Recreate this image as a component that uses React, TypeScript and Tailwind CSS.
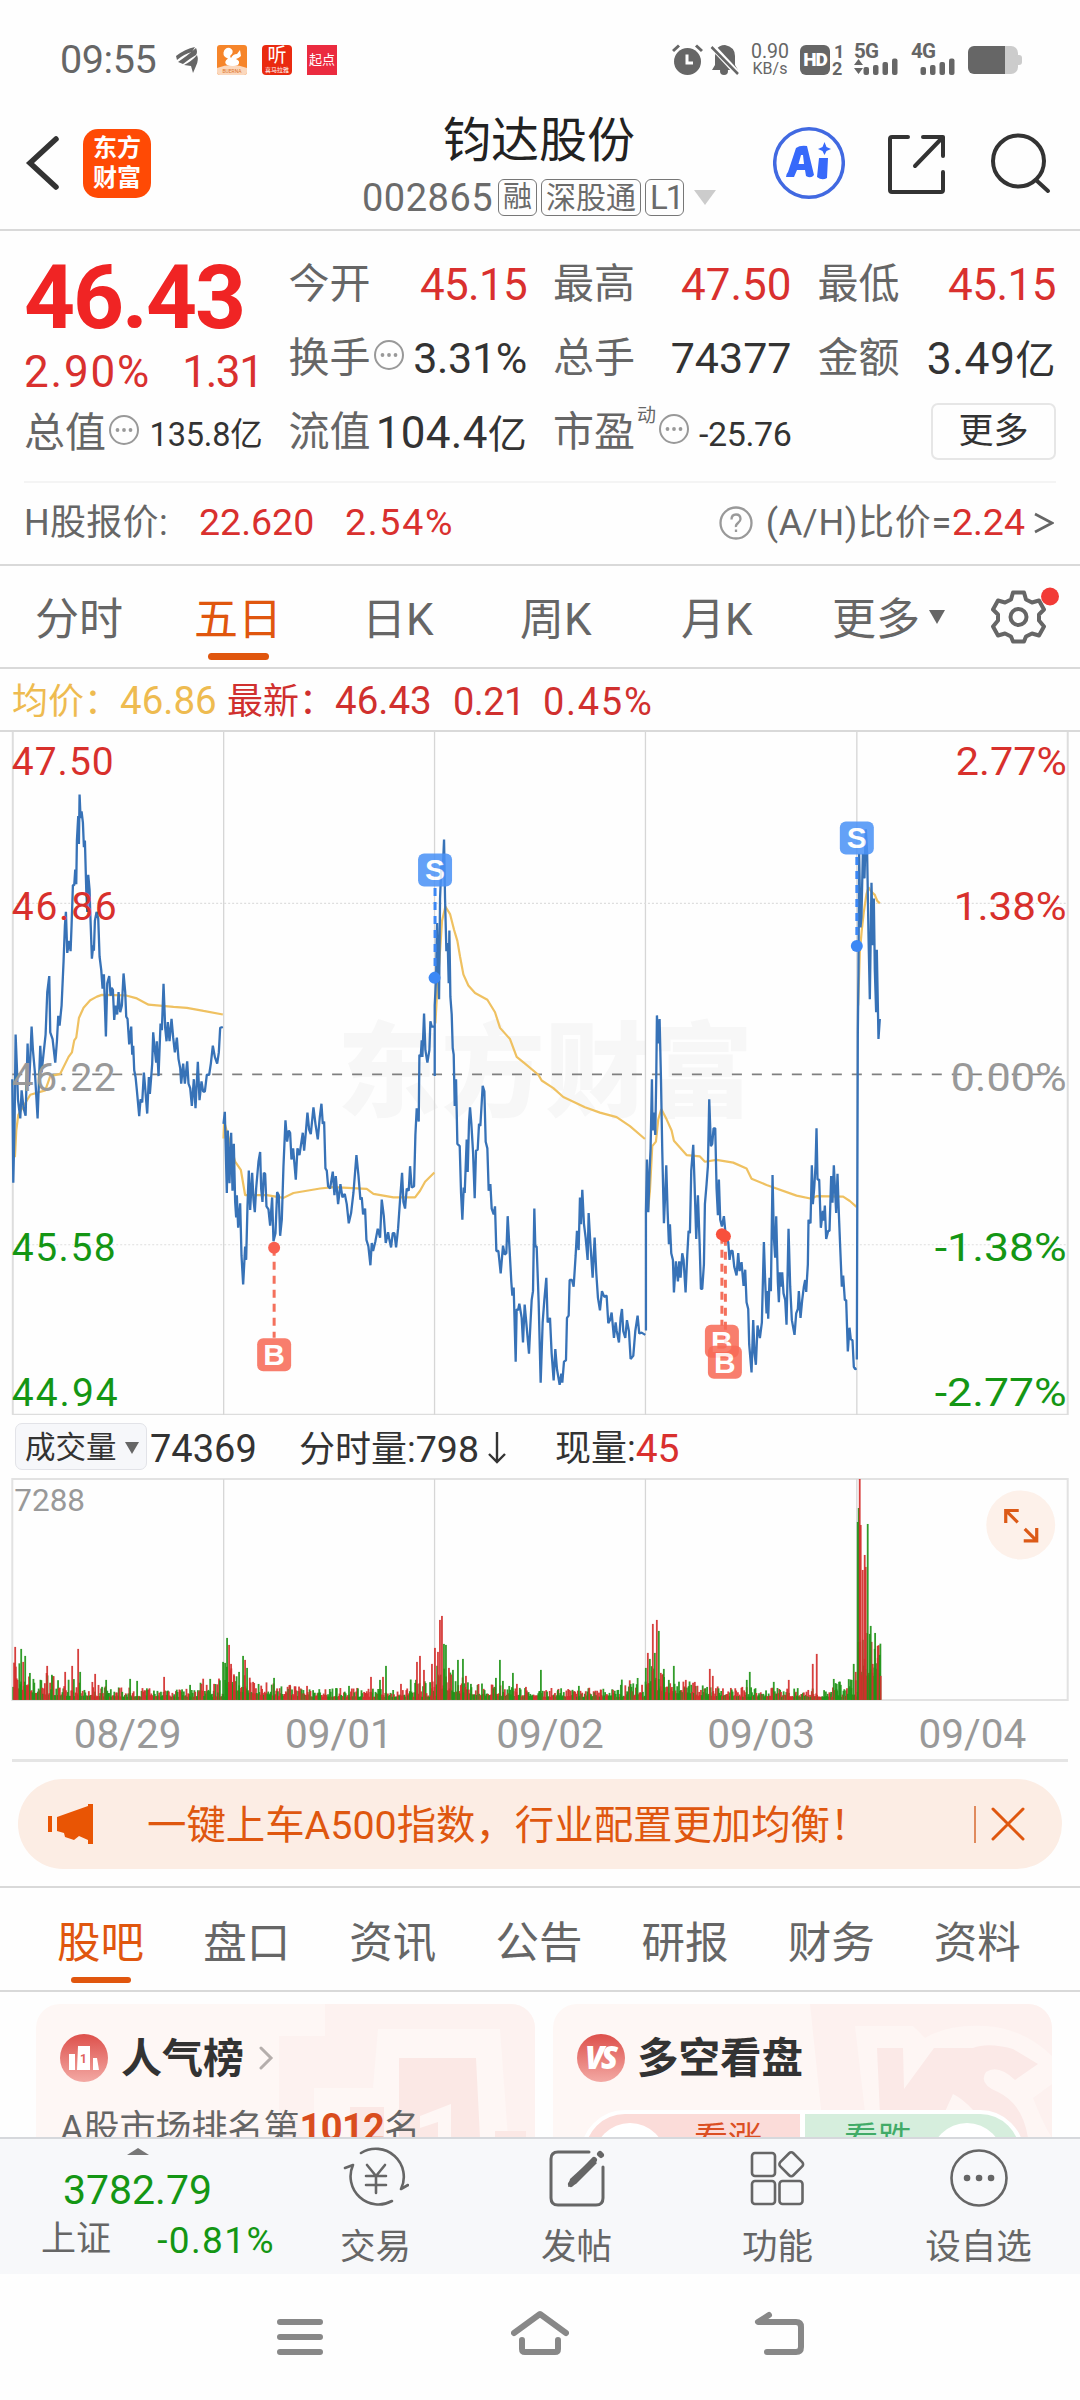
import type { ReactNode } from "react";

interface DaySeries {
  offset: number;
  price: string;
  average: string;
}

// x is three units per pixel, y is 2.24 units per pixel
const DAYS: DaySeries[] = [
  {
    offset: 0,
    price:
      "36,805 39,1037 43,900 46,705 50,780 53,850 60,893 64,830 70,870 76,887 82,725 86,820 90,760 94,687 98,740 104,790 112,893 117,790 120,730 124,790 131,740 136,705 141,610 147,574 150,700 157,715 165,768 170,720 174,663 178,685 184,640 190,540 194,460 197,430 201,522 207,495 211,518 214,460 218,370 222,370 225,335 228,368 230,270 234,215 236,278 238,167 241,220 244,205 248,230 251,285 254,270 258,380 261,430 264,347 268,380 270,430 275,535 279,505 281,517 284,450 289,430 294,445 298,530 303,560 307,602 311,570 317,709 321,590 327,574 331,618 334,600 338,605 342,672 346,640 351,660 355,610 360,655 365,640 370,568 375,610 378,665 382,670 387,727 393,687 396,750 399,730 402,785 406,800 410,830 417,888 421,850 426,857 431,790 435,825 441,882 446,800 449,838 453,800 456,770 459,700 463,735 468,768 470,720 475,798 481,680 485,695 490,591 495,690 499,720 503,677 508,720 514,670 519,712 524,745 530,712 535,760 540,780 543,815 549,770 554,815 561,765 565,815 570,825 575,865 581,805 586,870 593,766 598,852 604,810 609,833 614,833 620,795 627,795 632,770 638,730 644,755 651,770 656,745 660,690 668,688",
    average:
      "44,980 48,920 54,885 70,865 90,840 135,830 150,798 180,793 205,755 215,745 222,718 228,712 236,668 250,645 270,628 290,620 305,616 375,617 410,624 445,638 520,643 560,645 610,652 668,660",
  },
  {
    offset: 0,
    price:
      "670,905 674,878 680,1060 683,920 688,1038 693,925 697,1055 701,950 705,1080 708,1115 710,1065 714,1138 720,1083 724,1200 729,1265 735,1180 738,1210 742,1090 746,1010 750,1098 756,1015 760,1075 764,1103 768,1050 775,990 780,968 783,1050 787,1080 791,1015 795,1017 799,1090 805,1097 810,1133 816,1070 820,1168 826,1150 831,1058 836,1065 840,1156 845,1120 850,1000 856,897 861,945 866,920 870,925 874,985 879,960 887,1030 892,960 898,975 904,945 908,925 912,965 917,925 922,880 927,918 932,928 940,868 946,905 953,940 959,890 964,860 968,905 972,900 976,1005 980,1010 984,1045 990,1050 998,1012 1003,1065 1007,1022 1014,1085 1021,1040 1027,1070 1034,1062 1040,1085 1046,1128 1053,1105 1060,1060 1069,975 1075,1020 1081,1075 1085,1070 1089,1108 1095,1095 1099,1165 1105,1180 1111,1222 1115,1172 1119,1190 1126,1168 1133,1140 1140,1160 1145,1075 1151,1110 1157,1172 1164,1148 1168,1165 1173,1182 1178,1150 1183,1150 1188,1182 1194,1140 1200,1075 1206,1015 1210,1080 1215,1095 1220,1050 1226,1055 1230,1000 1235,1048 1242,1045 1246,930 1250,870 1256,900 1258,750 1262,755 1265,718 1267,755 1272,658 1276,740 1282,768 1288,740 1291,675 1295,687 1303,687",
    average:
      "670,938 672,900 705,990 722,1008 735,1065 800,1065 850,1071 880,1060 960,1050 1000,1047 1100,1051 1120,1062 1180,1070 1245,1070 1260,1055 1275,1035 1303,1014",
  },
  {
    offset: 1200,
    price:
      "104,798 104,640 108,580 111,455 117,626 120,400 124,325 128,340 132,268 135,400 139,518 143,500 146,590 148,472 151,620 155,660 158,735 161,750 164,865 168,805 172,950 179,955 183,1060 187,1120 191,1048 194,1060 200,940 203,1013 207,900 210,868 214,905 219,968 224,1072 228,965 233,963 237,905 241,910 248,820 253,832 257,945 262,960 266,1055 271,1040 275,1095 281,1108 285,1090 289,1190 295,1190 302,1240 309,1178 314,1198 319,1195 323,1112 328,1178 334,1260 337,1290 341,1272 347,1438 350,1320 354,1323 358,1308 365,1340 369,1395 374,1310 380,1360 387,1420 391,1358 395,1300 399,1280 403,1095 406,1180 410,1180 416,1305 422,1485 428,1350 433,1300 439,1250 443,1350 450,1340 455,1420 461,1480 466,1410 471,1455 479,1490 484,1465 487,1485 492,1438 498,1435 501,1340 506,1335 509,1255 516,1255 521,1270 527,1200 531,1145 536,1188 540,1070 543,1130 547,1053 552,1130 557,1160 563,1210 566,1105 571,1170 578,1250 584,1160 589,1240 594,1295 600,1323 606,1280 613,1293 620,1290 625,1352 630,1345 635,1328 642,1385 647,1350 650,1368 657,1395 662,1340 666,1320 670,1370 676,1385 681,1345 687,1370 692,1432 700,1425 706,1370 713,1335 718,1375 725,1373 736,1378",
    average:
      "106,680 112,600 118,540 126,450 136,418 150,435 162,470 172,495 180,530 190,570 205,595 225,612 262,627 285,655 300,690 330,715 350,755 375,770 415,795 425,808 460,825 490,845 555,868 600,880 650,890 690,910 735,939",
  },
  {
    offset: 1200,
    price:
      "738,1368 738,1100 741,985 745,1103 749,1010 752,960 756,805 758,920 762,880 766,930 769,800 771,662 775,725 779,670 783,800 787,965 792,1128 796,1060 799,998 803,1100 807,1175 810,1130 814,1195 819,1210 822,1283 828,1213 834,1258 838,1213 842,1250 847,1195 851,1210 857,1283 862,1200 866,1145 870,1150 874,1010 880,952 884,1040 889,1163 894,1065 899,1170 903,1275 907,1275 912,1220 915,1085 920,1040 924,1000 928,850 933,955 937,950 941,915 946,915 950,1050 954,1110 957,1030 961,1120 966,1135 972,1112 978,1160 985,1170 989,1210 993,1190 998,1190 1003,1225 1010,1245 1015,1195 1019,1235 1025,1215 1031,1268 1036,1232 1040,1305 1045,1320 1048,1400 1055,1462 1060,1345 1064,1420 1068,1445 1073,1357 1080,1385 1086,1350 1092,1170 1096,1260 1100,1330 1103,1280 1105,1342 1109,1250 1113,1280 1118,1020 1122,1160 1126,1205 1129,1112 1134,1260 1137,1305 1140,1238 1144,1270 1147,1238 1151,1285 1156,1300 1160,1355 1166,1140 1171,1270 1176,1345 1184,1378 1189,1330 1194,1320 1197,1280 1202,1340 1207,1300 1212,1270 1216,1255 1219,1282 1224,1220 1226,1120 1232,1128 1236,998 1239,1085 1243,1050 1247,1000 1250,915 1253,1030 1258,1030 1263,1138 1269,1100 1272,1122 1275,1088 1279,1163 1285,1145 1289,1145 1294,1022 1298,1082 1302,998 1306,1060 1309,1105 1313,1017 1317,1105 1321,1180 1326,1270 1330,1245 1335,1300 1339,1300 1344,1415 1349,1362 1353,1388 1358,1390 1362,1450 1366,1455 1370,1453",
    average:
      "744,1100 750,1055 757,955 768,945 775,895 784,872 800,895 815,920 822,943 860,975 900,978 915,990 950,986 1000,992 1040,1005 1055,1028 1100,1042 1190,1066 1235,1073 1250,1067 1330,1068 1350,1078 1370,1091",
  },
  {
    offset: 2100,
    price:
      "471,1433 474,700 476,568 478,300 482,465 485,440 489,300 494,355 498,245 502,300 506,480 510,626 515,365 519,505 522,400 525,560 529,655 531,515 536,715 540,670",
    average: "475,640 480,520 486,470 492,430 500,390 506,375 515,385 525,392 532,405 540,411",
  },
];

const UP = "#d8302c";
const DOWN = "#149614";

// [x, height, is up] of the volume bars that stand out
const PEAKS: [number, number, boolean][] = [
  [14, 53, true], [20, 51, false], [22, 38, true], [24, 44, false], [46, 34, true], [64, 28, true], [71, 34, true],
  [77, 51, true], [79, 28, false], [94, 26, true], [105, 20, false], [129, 21, false], [136, 19, false], [163, 23, true],
  [189, 15, false], [213, 16, true], [222, 38, false], [224, 37, false], [226, 62, false], [228, 55, true], [230, 36, true], [233, 24, true],
  [238, 28, false], [242, 44, false], [244, 40, true], [246, 32, false], [252, 18, true], [273, 22, false], [289, 15, true],
  [306, 14, true], [348, 14, false], [370, 23, true], [379, 20, false], [382, 23, true], [385, 34, false], [400, 16, true],
  [416, 38, true], [419, 44, true], [423, 30, true], [431, 36, true], [434, 52, true], [437, 48, true], [439, 80, true],
  [441, 84, true], [443, 56, false], [445, 55, false], [448, 32, true], [452, 30, false], [457, 40, false], [462, 41, false],
  [465, 24, true], [470, 16, false], [495, 22, false], [499, 40, false], [502, 19, false], [512, 27, false], [516, 16, true],
  [540, 30, false], [557, 10, false], [578, 14, false], [600, 10, true], [620, 15, false], [645, 32, false], [647, 47, true],
  [649, 41, false], [652, 76, true], [654, 47, false], [656, 80, true], [658, 69, false], [660, 27, true], [663, 31, false],
  [668, 20, false], [673, 34, false], [685, 20, true], [694, 18, true], [709, 31, true], [712, 24, true], [746, 20, false],
  [749, 28, false], [773, 18, false], [788, 20, true], [812, 36, true], [816, 46, true], [836, 16, false], [851, 20, false],
  [853, 36, false], [855, 28, true], [857, 178, false], [858, 192, false], [859, 221, true], [860, 175, true],
  [862, 130, true], [864, 145, true], [865, 133, true], [867, 176, false], [869, 66, false], [870, 74, false],
  [872, 36, true], [874, 51, false], [877, 54, true], [879, 45, false], [880, 24, true],
];

function baseBars() {
  const bars: [number, number, boolean][] = [];
  let seed = 17;
  const next = () => {
    seed = (seed * 16807) % 2147483647;
    return seed / 2147483647;
  };
  for (let x = 12; x < 880; x += 0.88) {
    const phase = ((x - 12) % 211.3) / 211.3;
    const level = x > 857 ? 46 : 9 + 20 * Math.exp(-phase * 7) + (phase > 0.88 ? 10 : 0) + (x < 105 ? 6 : 0);
    const floor = x > 857 ? 24 : 3 + 10 * Math.exp(-phase * 9);
    bars.push([x, floor + level * Math.pow(next(), 2), next() > 0.5]);
  }
  return bars;
}

const BARS = [...baseBars(), ...PEAKS];
const DIVIDERS = [223.5, 434.5, 645.5, 857];

function Dots() {
  return (
    <svg width="32" height="32" viewBox="0 0 32 32" fill="#999" className="mb-[8px] ml-[2px] shrink-0">
      <circle cx="16" cy="16" r="14" fill="none" stroke="#999" strokeWidth="2" />
      <circle cx="9.5" cy="16" r="1.9" />
      <circle cx="16" cy="16" r="1.9" />
      <circle cx="22.5" cy="16" r="1.9" />
    </svg>
  );
}

function Signal({ label }: { label: string }) {
  return (
    <svg width="46" height="42" viewBox="0 0 46 42" fill="#666" className="ml-[11px]">
      <text x="0" y="19" fontSize="20.5" fontWeight="700" letterSpacing="-0.8">{label}</text>
      {label === "5G" && <path d="M0 26L4.500 20L9 26ZM0 29L4.500 35L9 29Z" />}
      <rect x="9.500" y="28" width="5.500" height="8" rx="2" />
      <rect x="19" y="26" width="5.500" height="10" rx="2" />
      <rect x="28.500" y="23" width="5.500" height="13" rx="2" />
      <rect x="38" y="19.500" width="5.500" height="16.500" rx="2" />
    </svg>
  );
}

function StatusBar() {
  return (
    <div className="flex h-[118px] items-center pt-[2px] pl-[60px] text-[#666]">
      <span className="w-[115px] text-[39.5px] tracking-[-0.4px]">09:55</span>
      <svg width="24" height="28" viewBox="0 0 24 28" fill="#666">
        <path d="M1 10Q10 3 20 1L17 6Q9 8 2 14Z" />
        <path d="M3 16Q12 10 21 2Q23 6 21 9Q14 13 8 18Z" />
        <path d="M9 19Q17 15 22 9Q24 14 21 20L18 27L16 20Z" />
      </svg>
      <svg width="30" height="30" viewBox="0 0 30 30" className="ml-[18px]">
        <rect width="30" height="30" rx="3" fill="#f6852a" />
        <path d="M0 23Q15 17 30 23V27a3 3 0 0 1-3 3H3a3 3 0 0 1-3-3Z" fill="#fbd8bd" />
        <path d="M10 20Q6 17 11 13.500Q6 12 6.500 7.500Q8 2 13 3Q17 5 15 9Q12 11 14 13Q16 9 20 9L23 5L24 11Q22 13 19 14Q24 16 21 20Q16 22 10 20Z" fill="#fff" />
        <text x="15" y="27.500" fontSize="5" textAnchor="middle" fill="#e0752a">BUERNA</text>
      </svg>
      <div className="ml-[15px] flex h-[30px] w-[30px] flex-col items-center rounded-[4px] bg-[#ea2a10] text-white">
        <span className="h-[21px] text-[19px] leading-[21px]">听</span>
        <span className="h-[9px] text-[6px] leading-[8px]">喜马拉雅</span>
      </div>
      <div className="ml-[15px] flex h-[30px] w-[30px] items-center justify-center bg-[#eb2b3f] text-[13px] text-white">起点</div>

      <svg width="31" height="32" viewBox="0 0 31 32" fill="#666" className="ml-[335px]">
        <circle cx="15.500" cy="17.500" r="13.500" />
        <path d="M1 7L7 1.500M24 1.500L30 7" stroke="#666" strokeWidth="3" />
        <path d="M15 10.500V19H21" stroke="#fff" strokeWidth="3" fill="none" />
      </svg>
      <svg width="30" height="32" viewBox="0 0 30 32" fill="#666" className="ml-[7px]">
        <path d="M6 6Q9 1 15 1Q25 3 25 12V21L28 26H2L5 21V12Z" />
        <circle cx="14" cy="27" r="4" />
        <path d="M1 1L28 30" stroke="#fff" strokeWidth="6" />
        <path d="M1.500 3L28 30" stroke="#666" strokeWidth="2.500" />
      </svg>
      <div className="ml-[9px] flex w-[42px] flex-col items-center leading-[17px]">
        <span className="text-[19.5px]">0.90</span>
        <span className="text-[16px]">KB/s</span>
      </div>
      <div className="ml-[9px] flex h-[30px] w-[30px] items-center justify-center rounded-[6px] bg-[#666] text-[19px] font-black tracking-[-1px] text-white">HD</div>
      <div className="ml-[2px] flex w-[11px] flex-col text-[18px] leading-[17px] font-bold">
        <span className="pl-[2px]">1</span>
        <span>2</span>
      </div>
      <Signal label="5G" />
      <Signal label="4G" />
      <svg width="54" height="28" viewBox="0 0 54 28" className="ml-[11px]">
        <path d="M37 0H43a7 7 0 0 1 7 7V21a7 7 0 0 1-7 7H37Z" fill="#ccc" />
        <rect x="47" y="9" width="7" height="10" rx="3" fill="#ccc" />
        <path d="M6 0H37V28H6a6 6 0 0 1-6-6V6a6 6 0 0 1 6-6Z" fill="#666" />
      </svg>
    </div>
  );
}

function Header() {
  return (
    <header className="flex h-[113px] border-b-2 border-[#d9d9d9]">
      <svg width="36" height="60" viewBox="0 0 36 60" className="mt-[15px] ml-[25px]">
        <path d="M31 6L5 30L31 54" fill="none" stroke="#333" strokeWidth="5.500" strokeLinecap="round" />
      </svg>
      <div className="mt-[11px] ml-[22px] flex h-[69px] w-[68px] flex-col items-center justify-center rounded-[15px] bg-[#ff4a05] text-[24px] leading-[30px] font-bold text-white">
        <span>东方</span>
        <span>财富</span>
      </div>
      <div className="ml-[186px] flex w-[404px] flex-col items-center pt-[2px]">
        <h1 className="h-[59px] text-[48px] leading-[42px] text-[#222]">钧达股份</h1>
        <div className="flex items-center leading-none text-[#6b6b6b]">
          <span className="w-[136px] text-[38px] tracking-[0.5px]">002865</span>
          <span className="flex h-[37px] items-center rounded-[6px] border border-[#777] px-[4px] text-[29px]">融</span>
          <span className="ml-[4px] flex h-[37px] items-center rounded-[6px] border border-[#777] px-[4px] text-[30px]">深股通</span>
          <span className="ml-[4px] flex h-[37px] w-[39px] items-center rounded-[6px] border border-[#777] pl-[4px] text-[33px] tracking-[-2px]">L1</span>
          <svg width="22" height="15" viewBox="0 0 22 15" className="ml-[10px]">
            <path d="M0 0H22L11 15Z" fill="#ccc" />
          </svg>
        </div>
      </div>
      <svg width="72" height="74" viewBox="0 0 72 74" className="mt-[8px] ml-[32px]">
        <circle cx="36" cy="37" r="34.300" fill="none" stroke="#4169e1" strokeWidth="3.500" />
        <path d="M23 22Q27 19 34 20L41 49Q38 53 33 50L32 44H24L21 51H13Q13 48 15 46ZM28 29L25.500 38H31L30 29Z" fill="#3769fa" fillRule="evenodd" />
        <path d="M46 32H55L54 52Q49 55 44 51ZM51.500 16L53.500 21L58 23L53.500 25L51.500 29L49.500 25L45 23L49.500 21Z" fill="#3769fa" />
      </svg>
      <svg width="62" height="62" viewBox="0 0 62 62" fill="none" stroke="#333" strokeWidth="4" strokeLinecap="round" strokeLinejoin="round" className="mt-[15px] ml-[41px]">
        <path d="M22 4H6Q4 4 4 6V57Q4 59 6 59H55Q57 59 57 57V39M37 4H57V23M57 4L29 33" />
      </svg>
      <svg width="64" height="64" viewBox="0 0 64 64" fill="none" stroke="#333" strokeWidth="4" strokeLinecap="round" className="mt-[14px] ml-[40px]">
        <circle cx="30.500" cy="29" r="25.500" />
        <path d="M48 48L60 59" />
      </svg>
    </header>
  );
}

function Stat({ label, children }: { label: ReactNode; children: ReactNode }) {
  return (
    <div className="flex h-[74px] items-center justify-between text-[41px] leading-none text-[#333]">
      <span className="flex items-center text-[#666]">{label}</span>
      {children}
    </div>
  );
}

function Quote() {
  return (
    <section className="flex h-[250px] gap-[26px] px-[24px] leading-none">
      <div className="flex w-[239px] flex-col pt-[14px]">
        <span className="flex h-[106px] items-center text-[89px] font-bold tracking-[-2px] text-[#f02424]">46.43</span>
        <div className="flex h-[42px] items-center justify-between text-[44px] text-[#d9302e]">
          <span className="tracking-[1.8px]">2.90%</span>
          <span className="tracking-[-1.4px]">1.31</span>
        </div>
        <div className="flex h-[82px] items-center justify-between text-[41px] text-[#666]">
          <span className="flex items-center">
            总值
            <Dots />
          </span>
          <span className="pt-[2px] text-[32.5px] tracking-[-0.2px] text-[#333]">135.8亿</span>
        </div>
      </div>
      <div className="flex w-[239px] flex-col pt-[17px]">
        <Stat label="今开">
          <span className="text-[44px] tracking-[-0.7px] text-[#d9302e]">45.15</span>
        </Stat>
        <Stat label={<>换手<Dots /></>}>
          <span className="text-[43px] tracking-[-0.3px]">3.31%</span>
        </Stat>
        <Stat label="流值">
          <span className="text-[44px] tracking-[0.3px] whitespace-nowrap">104.4<span className="text-[39px]">亿</span></span>
        </Stat>
      </div>
      <div className="flex w-[239px] flex-col pt-[17px]">
        <Stat label="最高">
          <span className="text-[44px] text-[#d9302e]">47.50</span>
        </Stat>
        <Stat label="总手">
          <span className="text-[43px]">74377</span>
        </Stat>
        <Stat label={<>市盈<span className="ml-[2px] h-[54px] text-[19px]">动</span><Dots /></>}>
          <span className="pt-[2px] text-[34px] tracking-[-0.4px]">-25.76</span>
        </Stat>
      </div>
      <div className="flex w-[239px] flex-col pt-[17px]">
        <Stat label="最低">
          <span className="text-[44px] tracking-[-0.5px] text-[#d9302e]">45.15</span>
        </Stat>
        <Stat label="金额">
          <span className="text-[44.5px] tracking-[0.5px] whitespace-nowrap">3.49<span className="text-[40px]">亿</span></span>
        </Stat>
        <div className="flex h-[72px] items-center justify-end">
          <button className="h-[57px] w-[125px] rounded-[7px] border-2 border-[#e6e6e6] text-[35px] text-[#333]">更多</button>
        </div>
      </div>
    </section>
  );
}

function HShare() {
  return (
    <div className="mx-[24px] flex h-[83px] items-center border-t-2 border-[#f4f4f4] text-[37.5px] leading-none text-[#666]">
      <span className="w-[175px] text-[36px] tracking-[0.3px]">H股报价:</span>
      <span className="w-[146px] text-[#d9302e]">22.620</span>
      <span className="tracking-[1.7px] text-[#d9302e]">2.54%</span>
      <svg width="34" height="34" viewBox="0 0 34 34" fill="none" stroke="#999" strokeWidth="2.300" className="ml-auto">
        <circle cx="17" cy="17" r="15.500" />
        <path d="M12.500 13.500Q12.500 8.500 17 8.500T21.500 13Q21.500 15 19 17T17 21M17 23.500V26" />
      </svg>
      <span className="ml-[13px] text-[36px] tracking-[0.7px]">(A/H)比价=</span>
      <span className="text-[#d9302e]">2.24</span>
      <svg width="20" height="22" viewBox="0 0 20 22" fill="none" stroke="#666" strokeWidth="2.600" className="mr-[2px] ml-[9px]">
        <path d="M1 2L18 11L1 20" />
      </svg>
    </div>
  );
}

const PERIODS = [
  { label: "分时", width: "w-[159px]" },
  { label: "五日", width: "w-[168px]" },
  { label: "日K", width: "w-[158px]" },
  { label: "周K", width: "w-[161px]" },
  { label: "月K", width: "w-[151px]" },
];

function Periods() {
  return (
    <nav className="flex h-[105px] border-y-2 border-[#d9d9d9] pt-[21px] pl-[35px] text-[44px] leading-[66px] text-[#666]">
      {PERIODS.map((p) => (
        <div key={p.label} className={p.width}>
          {p.label === "五日" ? (
            <div className="flex w-[88px] flex-col items-center text-[#e0560e]">
              {p.label}
              <div className="h-[7px] w-[61px] rounded-full bg-[#e0560e]" />
            </div>
          ) : (
            p.label
          )}
        </div>
      ))}
      <div className="flex w-[159px] gap-[9px]">
        更多
        <svg width="16" height="14" viewBox="0 0 16 14" className="mt-[23px]">
          <path d="M0 0H16L8 14Z" fill="#666" />
        </svg>
      </div>
      <svg width="70" height="62" viewBox="0 2.500 70 62" fill="none" stroke="#666" strokeWidth="4" strokeLinejoin="round">
        <path d="M22 8H33L35 15L41 18L48 16L53 25L48 30V36L53 42L48 51L41 49L35 52L33 57H22L20 52L14 49L7 51L2 42L7 36V30L2 25L7 16L14 18L20 15Z" />
        <circle cx="27.500" cy="32.500" r="8" />
        <circle cx="59" cy="12" r="9" fill="#f23a36" stroke="none" />
      </svg>
    </nav>
  );
}

function Marker({ x, y, kind }: { x: number; y: number; kind: "B" | "S" }) {
  return (
    <g opacity="0.86">
      <rect x={x - 17} y={y - 16.500} width="34" height="33" rx="6" fill={kind === "B" ? "#f86a56" : "#4a92f7"} />
      <text x={x} y={y + 10.500} fontSize="30" fontFamily="Liberation Sans" fontWeight="700" textAnchor="middle" fill="#fff">
        {kind}
      </text>
    </g>
  );
}

const AXIS = [
  { y: 55, left: "47.50", leftWidth: 102, right: "2.77%", rightWidth: 111, color: UP },
  { y: 200, left: "46.86", leftWidth: 105, right: "1.38%", rightWidth: 113, color: UP },
  { y: 371, left: "46.22", leftWidth: 104, right: "0.00%", rightWidth: 116, color: "#999" },
  { y: 541, left: "45.58", leftWidth: 104, right: "-1.38%", rightWidth: 132, color: DOWN },
  { y: 686, left: "44.94", leftWidth: 106, right: "-2.77%", rightWidth: 132, color: DOWN },
];

function PriceChart() {
  return (
    <svg width="1080" height="684" viewBox="0 12 1080 684" fill="none">
      <text x="337" y="389" fontSize="104" fontWeight="900" fill="#f7f7f7">东方财富</text>
      <path d="M12.500 12V695M1068 12V695M12 695H1069" stroke="#ddd" strokeWidth="2" />
      {DIVIDERS.map((x) => (
        <path key={x} d={`M${x} 12V695`} stroke="#d6d6d6" strokeWidth="1.300" />
      ))}
      <path d="M12 183.500H1068M12 525H1068" stroke="#dedede" strokeWidth="1.200" strokeDasharray="2 2" />
      <path d="M12 354.500H1068" stroke="#808080" strokeWidth="1.800" strokeDasharray="10 10" />
      {DAYS.map((d, i) => (
        <g key={i} transform={`scale(0.33333 0.44643) translate(${d.offset} 0)`} strokeLinejoin="bevel">
          <polyline points={d.average} stroke="#efc161" strokeWidth="2.200" vectorEffect="non-scaling-stroke" />
          <polyline points={d.price} stroke="#3772b7" strokeWidth="2.300" vectorEffect="non-scaling-stroke" />
        </g>
      ))}
      <path d="M435 168V258M857 137V226" stroke="#3c88f5" strokeWidth="3" strokeDasharray="8 6" />
      <circle cx="434.500" cy="258" r="6" fill="#3c88f5" />
      <circle cx="857" cy="226" r="6" fill="#3c88f5" />
      <path d="M274 528V618M722 516V606M725.500 518V626" stroke="#f4705c" strokeWidth="3" strokeDasharray="8 6" />
      <circle cx="274" cy="528" r="6" fill="#f86050" />
      <circle cx="722" cy="514.500" r="6" fill="#f8503c" />
      <circle cx="725" cy="516.500" r="6" fill="#f8503c" />
      <Marker x={435} y={150} kind="S" />
      <Marker x={857} y={118} kind="S" />
      <Marker x={274} y={635} kind="B" />
      <Marker x={722} y={621.500} kind="B" />
      <Marker x={725} y={642.500} kind="B" />
      {AXIS.map((a) => (
        <g key={a.y} fill={a.color} fontSize="39">
          <text x="11.500" y={a.y} textLength={a.leftWidth}>{a.left}</text>
          <text x={1067 - a.rightWidth} y={a.y} textLength={a.rightWidth} lengthAdjust="spacingAndGlyphs">{a.right}</text>
        </g>
      ))}
    </svg>
  );
}

function VolumeChart() {
  return (
    <>
      <div className="flex h-[63px] items-center pl-[15px] text-[36px] leading-none text-[#333]">
        <span className="flex h-[47px] w-[132px] items-center gap-[8px] rounded-[7px] border border-[#e2e3e8] bg-[#f6f7fa] pt-[3px] pl-[9px] text-[30.5px]">
          成交量
          <svg width="14" height="12" viewBox="0 0 14 12">
            <path d="M0 0H14L7 12Z" fill="#666" />
          </svg>
        </span>
        <span className="ml-[3px] w-[149px] pt-[5px] text-[38px]">74369</span>
        <span className="pt-[5px]">分时量:<span className="text-[37.5px]">798</span></span>
        <svg width="18" height="32" viewBox="0 0 18 32" fill="none" stroke="#333" strokeWidth="2.400" className="mt-[3px] ml-[9px]">
          <path d="M9 0V30M1 22L9 30L17 22" />
        </svg>
        <span className="ml-[49px] pt-[5px]">现量:</span>
        <span className="pt-[5px] text-[39px] text-[#d9302e]">45</span>
      </div>
      <svg width="1080" height="223" viewBox="0 0 1080 223">
        <path d="M12 1H1068V222H12Z" fill="none" stroke="#e2e2e2" strokeWidth="2" />
        {DIVIDERS.map((x) => (
          <path key={x} d={`M${x} 1V222`} stroke="#d6d6d6" strokeWidth="1.300" />
        ))}
        {BARS.map(([x, h, up], i) => (
          <rect key={i} x={x} y={222 - h} width="1.800" height={h} fill={up ? "#d22f2c" : "#1f9418"} opacity="0.92" />
        ))}
        <text x="14" y="33" fontSize="31.500" fill="#999">7288</text>
        <circle cx="1021" cy="47" r="34.500" fill="#fdf1ea" />
        <path d="M1006 45V32.500H1019M1006.500 33L1018 44.500M1037 50V63H1024M1036.500 62.500L1025 51" fill="none" stroke="#dc5a17" strokeWidth="3.200" />
      </svg>
      <div className="mx-[12px] flex h-[61px] items-center border-b-3 border-[#e5e5e5] pt-[8px] text-[40.5px] leading-none text-[#999]">
        {["08/29", "09/01", "09/02", "09/03", "09/04"].map((date) => (
          <span key={date} className="w-[211.5px] pl-[20px] text-center">{date}</span>
        ))}
      </div>
    </>
  );
}

function Banner() {
  return (
    <div className="mx-[18px] mt-[17px] flex h-[90px] shrink-0 items-center rounded-full bg-[#fcede4] text-[#df570f]">
      <svg width="46" height="42" viewBox="0 0 46 42" fill="#e95504" className="ml-[30px]">
        <path d="M0 13H4V29H0ZM9 14L40 3V1H45V41H40V37L31 33L26 37L17 34L16 30L9 28Z" />
      </svg>
      <span className="ml-[53px] w-[827px] pt-[2px] text-[39.4px] whitespace-nowrap">一键上车A500指数，行业配置更加均衡！</span>
      <div className="h-[37px] w-[2px] bg-[#e08a5d]" />
      <svg width="34" height="34" viewBox="0 0 34 34" fill="none" stroke="#df570f" strokeWidth="3" strokeLinecap="round" className="ml-[15px]">
        <path d="M2 2L32 32M32 2L2 32" />
      </svg>
    </div>
  );
}

function SectionTabs() {
  return (
    <nav className="mt-[17px] flex h-[106px] shrink-0 border-y-2 border-[#d9d9d9] pt-[23px] pl-[57px] text-[43.5px] leading-[66px] text-[#666]">
      <div className="flex w-[146.5px] flex-col text-[#e0560e]">
        股吧
        <div className="ml-[14px] h-[6px] w-[60px] rounded-full bg-[#e0560e]" />
      </div>
      {["盘口", "资讯", "公告", "研报", "财务", "资料"].map((t) => (
        <div key={t} className="w-[146.5px]">{t}</div>
      ))}
    </nav>
  );
}

function Cards() {
  return (
    <section className="flex h-[145px] gap-[18px] overflow-hidden pt-[12px] pl-[36px] leading-none">
      <div className="relative h-[220px] w-[499px] overflow-hidden rounded-[24px] bg-[#fef7f5]">
        <svg width="499" height="220" viewBox="0 0 499 220" className="absolute inset-0">
          <path d="M243 32H289V0H499V134H243Z" fill="#fdf2f0" />
          <path d="M278 84H337L342 25H464L472 134H278Z" fill="#fef7f5" />
          <path d="M363 54H440L444 134H363ZM314 103H348V134H314ZM459 127H490V140H459Z" fill="#fbe8e5" />
          <path d="M384 112L415 100V140H402V118L384 124Z" fill="#fef7f5" />
        </svg>
        <div className="relative flex h-[105px] items-center pt-[3px] pl-[24px]">
          <svg width="48" height="48" viewBox="0 0 48 48">
            <defs>
              <linearGradient id="badge" x2="0" y2="1">
                <stop stopColor="#dd504b" />
                <stop offset="1" stopColor="#f3a9a4" />
              </linearGradient>
            </defs>
            <circle cx="24" cy="24" r="24" fill="url(#badge)" />
            <path d="M9 20H15V36H9ZM18 12H30V36H17ZM33 24H37L39 36H33Z" fill="#fff" />
            <text x="23.500" y="29" fontSize="12" fontWeight="700" textAnchor="middle" fill="#df625c">1</text>
          </svg>
          <span className="ml-[13px] pt-[2px] text-[41px] font-bold text-[#333]">人气榜</span>
          <svg width="15" height="24" viewBox="0 0 15 24" fill="none" stroke="#b5aeac" strokeWidth="3" strokeLinecap="round" className="ml-[15px]">
            <path d="M2 2L12 12L2 22" />
          </svg>
        </div>
        <p className="relative pl-[24px] text-[36px] whitespace-nowrap text-[#666]">
          A股市场排名第<span className="text-[38px] font-bold tracking-[-0.6px] text-[#d94d1e]">1012</span>名
        </p>
      </div>
      <div className="relative h-[220px] w-[499px] overflow-hidden rounded-[24px] bg-[#fef7f5]">
        <svg width="499" height="220" viewBox="0 0 499 220" className="absolute inset-0">
          <path d="M257 0H499V220H280Z" fill="#fdf1ef" />
          <path d="M302 22H360L372 34Q395 20 432 22Q470 24 499 52V80L480 94Q490 120 499 134H315Z" fill="#fef6f4" />
          <path d="M324 44H350L351 85L381 44H420Q435 38 460 45L485 60L462 76Q445 60 433 68Q425 80 445 88Q470 100 475 134H440Q420 100 400 90L380 134H328Z" fill="#fbe9e7" />
        </svg>
        <div className="relative flex h-[106px] items-center pt-[2px] pl-[24px]">
          <svg width="48" height="48" viewBox="0 0 48 48">
            <circle cx="24" cy="24" r="24" fill="url(#badge)" />
            <text x="23" y="35" fontSize="31" fontFamily="Open Sans" fontWeight="800" fontStyle="italic" letterSpacing="-3" textAnchor="middle" fill="#fff">VS</text>
          </svg>
          <span className="ml-[12px] pt-[2px] text-[41.5px] font-bold text-[#333]">多空看盘</span>
        </div>
        <div className="relative mx-[28px] flex h-[88px] gap-[5px] overflow-hidden rounded-full border-4 border-white bg-white text-[34px]">
          <div className="flex w-[215px] bg-[#fbdcd9]">
            <div className="mt-[9px] ml-[9px] h-[72px] w-[72px] rounded-full bg-white" />
            <span className="mt-[8px] ml-[28px] text-[#db4f23]">看涨</span>
          </div>
          <div className="flex flex-1 bg-[#d6eedd]">
            <span className="mt-[8px] ml-[39px] text-[#42ab68]">看跌</span>
            <div className="mt-[9px] ml-[19px] h-[72px] w-[72px] rounded-full bg-white" />
          </div>
        </div>
      </div>
    </section>
  );
}

function Action({ label, children }: { label: string; children: ReactNode }) {
  return (
    <div className="flex w-[201px] flex-col items-center">
      <svg width="66" height="66" viewBox="0 0 66 66" fill="none" stroke="#666" strokeWidth="2.600" strokeLinecap="round" strokeLinejoin="round">
        {children}
      </svg>
      <span className="mt-[19px] text-[35.5px] text-[#666]">{label}</span>
    </div>
  );
}

function BottomBar() {
  return (
    <footer className="flex h-[137px] shrink-0 border-t-2 border-[#d6d8dc] bg-[#f7f8fa] leading-none">
      <div className="flex w-[275px] flex-col items-center pt-[9px] text-[#149614]">
        <svg width="22" height="7" viewBox="0 0 22 7">
          <path d="M0 7L11 0L22 7Z" fill="#777" />
        </svg>
        <span className="mt-[15px] text-[41px]">3782.79</span>
        <div className="mt-[11px] flex w-full justify-between pl-[41px] text-[37px]">
          <span className="text-[35px] text-[#666]">上证</span>
          <span className="tracking-[1.4px]">-0.81%</span>
        </div>
      </div>
      <div className="flex pt-[6px]">
        <Action label="交易">
          <path d="M18 8A28 28 0 0 1 58 44L65 40M49 56A28 28 0 0 1 10 20L2 23" />
          <path d="M24 20L33 31L42 20M23 31H43M23 40H43M33 31V48" />
        </Action>
        <Action label="发帖">
          <path d="M45 7H14Q7 7 7 14V53Q7 60 14 60H52Q59 60 59 53V22" strokeWidth="3" />
          <path d="M56 9L57 10M50 15L27 39" strokeWidth="6" />
          <path d="M48 14L26 34L24 42L32 39L53 18Z" fill="#666" stroke="none" />
        </Action>
        <Action label="功能">
          <rect x="7" y="8" width="23" height="23" rx="3" />
          <rect x="7" y="36" width="23" height="23" rx="3" />
          <rect x="34.500" y="36" width="23" height="23" rx="3" />
          <rect x="37" y="10" width="18.500" height="18.500" rx="3" transform="rotate(45 46.25 19.25)" />
        </Action>
        <Action label="设自选">
          <circle cx="33" cy="33" r="27.500" />
          <path d="M21 33H21.100M33 33H33.100M45 33H45.100" strokeWidth="6.500" />
        </Action>
      </div>
    </footer>
  );
}

function SystemNav() {
  return (
    <div className="flex h-[126px] justify-center gap-[185px] pt-[34px]">
      <svg width="52" height="52" viewBox="0 0 52 52" stroke="#888" strokeWidth="6" strokeLinecap="round">
        <path d="M6 14H46M6 29H46M6 44H46" />
      </svg>
      <svg width="58" height="52" viewBox="0 0 58 52" fill="none" stroke="#888" strokeWidth="6" strokeLinecap="round" strokeLinejoin="round">
        <path d="M3 25L29 6L55 25M11 32V41Q11 44 14 44H44Q47 44 47 41V32" />
      </svg>
      <svg width="52" height="52" viewBox="0 0 52 52" fill="none" stroke="#888" strokeWidth="6" strokeLinecap="round" strokeLinejoin="round">
        <path d="M15 7L4 14H42Q47 14 47 19V39Q47 44 42 44H13" />
      </svg>
    </div>
  );
}

export default function App() {
  return (
    <div className="flex h-[2400px] w-[1080px] flex-col overflow-hidden bg-[#fefefe] font-[Roboto,'Noto_Sans_CJK_SC',sans-serif]">
      <StatusBar />
      <Header />
      <Quote />
      <HShare />
      <Periods />
      <div className="flex h-[63px] shrink-0 items-center border-b-2 border-[#d9d9d9] pt-[5px] pl-[12px] text-[36px] leading-none text-[#d0302e]">
        <span className="w-[215px] text-[#eebb50]">均价：<span className="text-[38.5px]">46.86</span></span>
        <span className="w-[226px] whitespace-nowrap">最新：<span className="text-[38.5px]">46.43</span></span>
        <span className="w-[90px] text-[38px] tracking-[-0.6px]">0.21</span>
        <span className="text-[38px] tracking-[1.7px]">0.45%</span>
      </div>
      <PriceChart />
      <VolumeChart />
      <Banner />
      <SectionTabs />
      <Cards />
      <BottomBar />
      <SystemNav />
    </div>
  );
}
